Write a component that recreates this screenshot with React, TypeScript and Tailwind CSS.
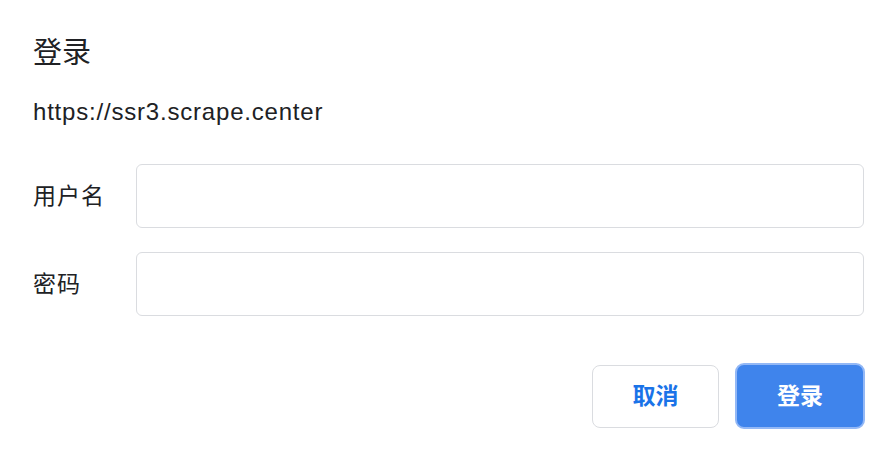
export default function App() {
  const font = { fontFamily: '"Liberation Sans", "Noto Sans CJK SC", sans-serif' };
  return (
    <div
      className="w-[896px] h-[460px] bg-white pl-[33px] pr-[32px] pt-[35px] flex flex-col text-[#202124]"
      style={font}
    >
      <h1 className="text-[29px] leading-[36px] font-normal">登录</h1>
      <p className="mt-[27px] text-[24px] leading-[28px] tracking-[0.8px]">https://ssr3.scrape.center</p>

      <div className="mt-[38px] flex flex-col gap-[24px]">
        <div className="flex items-center">
          <label className="w-[103px] text-[23px] tracking-[1px]">用户名</label>
          <input className="flex-1 h-[64px] rounded-[6px] border border-[#dadce0] outline-none px-3 text-[22px]" />
        </div>
        <div className="flex items-center">
          <label className="w-[103px] text-[23px] tracking-[1px]">密码</label>
          <input type="password" className="flex-1 h-[64px] rounded-[6px] border border-[#dadce0] outline-none px-3 text-[22px]" />
        </div>
      </div>

      <div className="mt-[47px] flex justify-end items-center gap-[16px]">
        <button className="w-[127px] h-[63px] rounded-[8px] border border-[#dadce0] bg-white text-[#1a73e8] text-[23px] font-bold">
          取消
        </button>
        <button className="w-[130px] h-[66px] rounded-[9px] border-2 border-[#93b8f6] bg-[#3f84ec] text-white text-[23px] font-bold mr-[-1px]">
          登录
        </button>
      </div>
    </div>
  );
}
